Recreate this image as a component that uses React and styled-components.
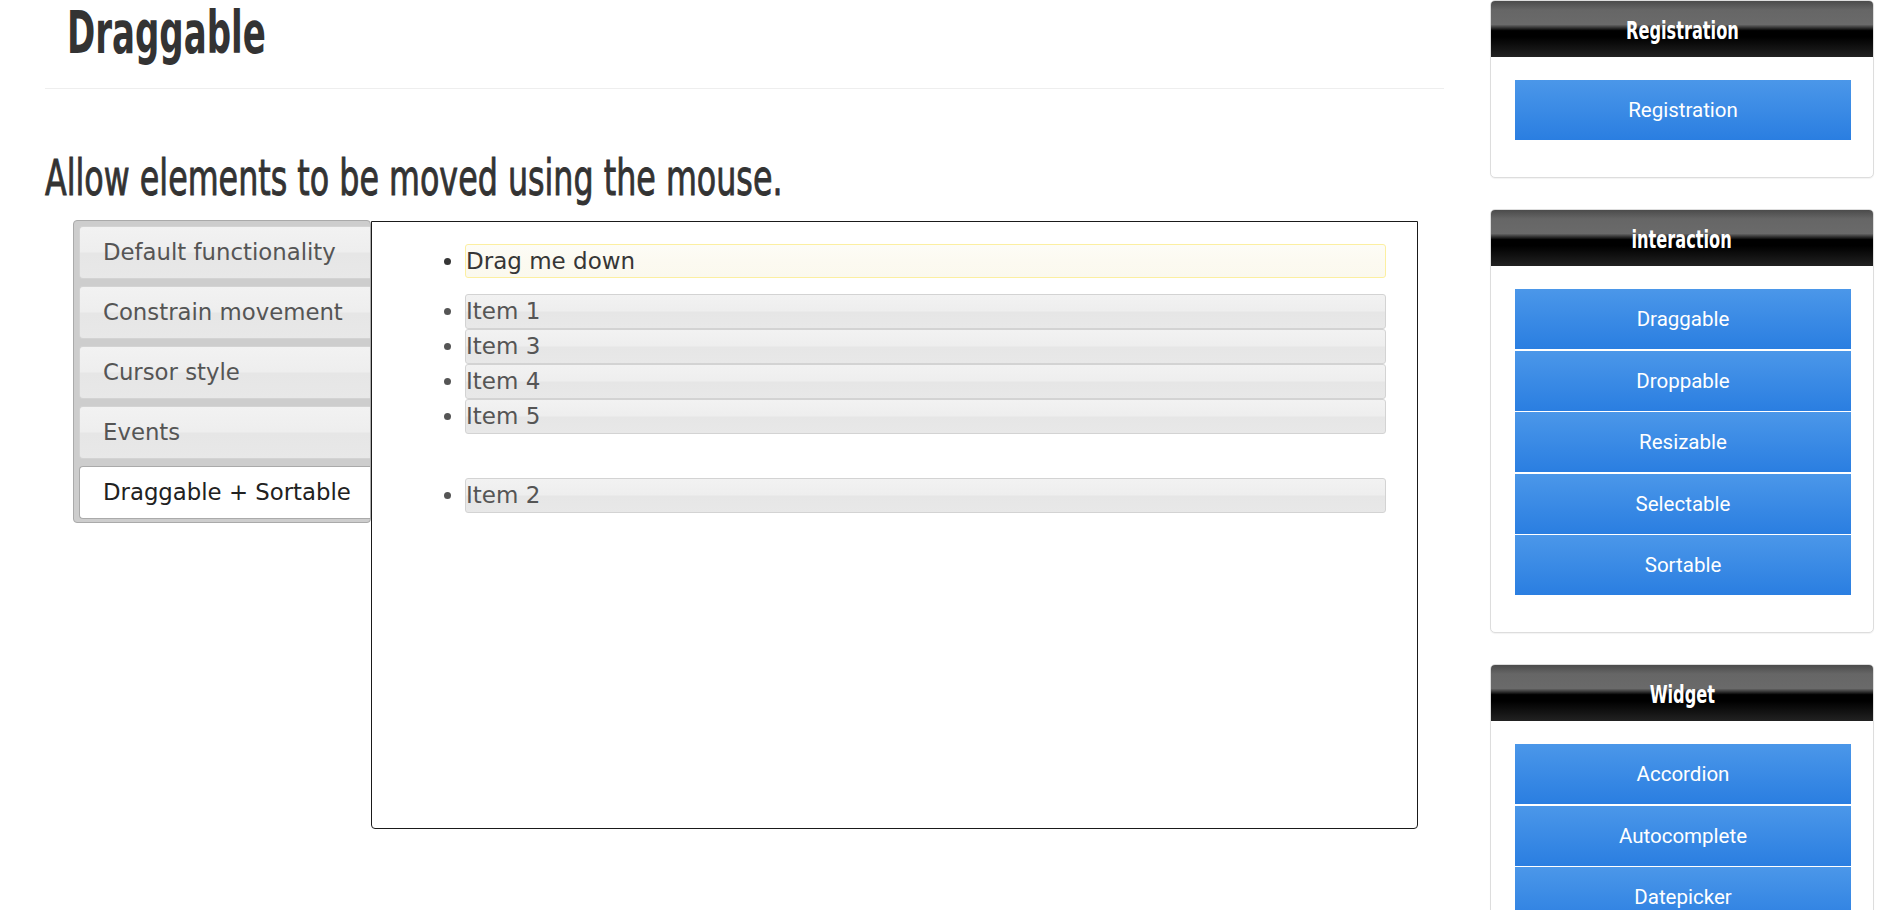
import React from 'react';
import styled, { createGlobalStyle } from 'styled-components';

const condensed = `"DejaVu Sans Condensed", "Liberation Sans Narrow", sans-serif`;
const verdana = `"DejaVu Sans", Verdana, sans-serif`;

const GlobalStyle = createGlobalStyle`
	html, body {
		margin: 0;
		padding: 0;
		background: #fff;
		overflow: hidden;
	}
	body {
		font-family: ${verdana};
		color: #333;
	}
`;

const Page = styled.div`
	display: flex;
	align-items: flex-start;
	width: 1894px;
	height: 910px;
`;

const Main = styled.main`
	width: 1399px;
	margin-left: 45px;
`;

const PageHeader = styled.div`
	padding: 0 0 20.5px 22px;
	border-bottom: 1px solid #eee;
`;

// Oswald is not available, so a condensed face is narrowed further
const Title = styled.h1`
	margin: 0;
	font-family: ${condensed};
	font-size: 58px;
	line-height: 67.5px;
	font-weight: bold;
	color: #333;
	span {
		display: inline-block;
		transform: scaleX(0.652);
		transform-origin: left center;
	}
`;

const Lead = styled.h2`
	margin: 64.5px 0 0;
	font-family: ${condensed};
	font-size: 49px;
	line-height: 49px;
	font-weight: normal;
	color: #333;
	-webkit-text-stroke: 0.9px #333;
	transform: scaleX(0.72);
	transform-origin: left center;
`;

const Demo = styled.div`
	display: flex;
	align-items: flex-start;
	margin: 17.5px 0 0 28px;
`;

const TabList = styled.ul`
	display: flex;
	flex-direction: column;
	gap: 7px;
	box-sizing: border-box;
	width: 298px;
	margin: 0;
	padding: 5px 0 3px 5px;
	list-style: none;
	background: #cdcdcd;
	border: 1px solid #aaa;
	border-radius: 4px;
`;

const glass = 'linear-gradient(to bottom, #f2f2f2 0%, #eeeeee 48%, #e6e6e6 52%, #e8e8e8 100%)';

const Tab = styled.li`
	display: flex;
	align-items: center;
	box-sizing: border-box;
	height: 53px;
	padding: 0 0 2px 23px;
	border: 1px solid ${(p) => (p.$active ? '#aaa' : '#d3d3d3')};
	border-right: none;
	border-radius: 4px 0 0 4px;
	background: ${(p) => (p.$active ? '#fff' : glass)};
	color: ${(p) => (p.$active ? '#212121' : '#555')};
	font-family: ${verdana};
	font-size: 22.8px;
	white-space: nowrap;
`;

const Panel = styled.div`
	box-sizing: border-box;
	width: 1047px;
	height: 608px;
	margin-top: 1px;
	padding: 22px 31px 0 93px;
	border: 1px solid #1a1a1a;
	border-radius: 0 0 4px 4px;
`;

const List = styled.ul`
	margin: ${(p) => p.$gap || 0}px 0 0;
	padding: 0;
	list-style: disc outside;
`;

const Item = styled.li`
	box-sizing: border-box;
	height: ${(p) => (p.$highlight ? 34 : 35)}px;
	padding: 3px 0 0 0;
	border: 1px solid ${(p) => (p.$highlight ? '#fcefa1' : '#d3d3d3')};
	border-radius: 3px;
	background: ${(p) =>
		p.$highlight
			? 'linear-gradient(to bottom, #fdfcf6 0%, #fcfaf1 50%, #fbf9ee 100%)'
			: glass};
	color: ${(p) => (p.$highlight ? '#363636' : '#555')};
	font-family: ${verdana};
	font-size: 23px;
	line-height: 27px;
`;

const Aside = styled.aside`
	display: flex;
	flex-direction: column;
	gap: 31px;
	width: 384px;
	margin-left: 46px;
`;

const Card = styled.section`
	background: #fff;
	border: 1px solid #ddd;
	border-radius: 5px;
	box-shadow: 0 1px 1px rgba(0, 0, 0, 0.05);
	overflow: hidden;
`;

const CardHeader = styled.h3`
	margin: 0;
	height: 56px;
	line-height: 60px;
	text-align: center;
	font-family: ${condensed};
	font-size: 25px;
	font-weight: bold;
	color: #fff;
	background: linear-gradient(
		to bottom,
		#4b4b4b 0%,
		#666 16%,
		#6a6a6a 42%,
		#000 53%,
		#000 64%,
		#222 100%
	);
	overflow: hidden;
	span {
		display: inline-block;
		transform: scaleX(0.72);
	}
`;

const CardBody = styled.div`
	display: flex;
	flex-direction: column;
	gap: 1.5px;
	padding: 23px 22px 37px 24px;
`;

const NavButton = styled.a`
	display: flex;
	align-items: center;
	justify-content: center;
	height: 60px;
	background: linear-gradient(to bottom, #4b97e9 0%, #2a7ee1 100%);
	color: #fff;
	font-family: Roboto, "Liberation Sans", sans-serif;
	font-size: 20.5px;
	text-decoration: none;
`;

const tabs = [
	'Default functionality',
	'Constrain movement',
	'Cursor style',
	'Events',
	'Draggable + Sortable'
];

const menus = [
	{ title: 'Registration', links: ['Registration'] },
	{
		title: 'interaction',
		links: ['Draggable', 'Droppable', 'Resizable', 'Selectable', 'Sortable']
	},
	{
		title: 'Widget',
		links: ['Accordion', 'Autocomplete', 'Datepicker']
	}
];

export default function App() {
	return (
		<>
			<GlobalStyle />
			<Page>
				<Main>
					<PageHeader>
						<Title>
							<span>Draggable</span>
						</Title>
					</PageHeader>
					<Lead>Allow elements to be moved using the mouse.</Lead>

					<Demo>
						<TabList>
							{tabs.map((t, i) => (
								<Tab key={t} $active={i === tabs.length - 1}>
									{t}
								</Tab>
							))}
						</TabList>
						<Panel>
							<List>
								<Item $highlight>Drag me down</Item>
							</List>
							<List $gap={16}>
								<Item>Item 1</Item>
								<Item>Item 3</Item>
								<Item>Item 4</Item>
								<Item>Item 5</Item>
							</List>
							<List $gap={44}>
								<Item>Item 2</Item>
							</List>
						</Panel>
					</Demo>
				</Main>

				<Aside>
					{menus.map((m) => (
						<Card key={m.title}>
							<CardHeader>
								<span>{m.title}</span>
							</CardHeader>
							<CardBody>
								{m.links.map((l) => (
									<NavButton key={l} href="#">
										{l}
									</NavButton>
								))}
							</CardBody>
						</Card>
					))}
				</Aside>
			</Page>
		</>
	);
}
